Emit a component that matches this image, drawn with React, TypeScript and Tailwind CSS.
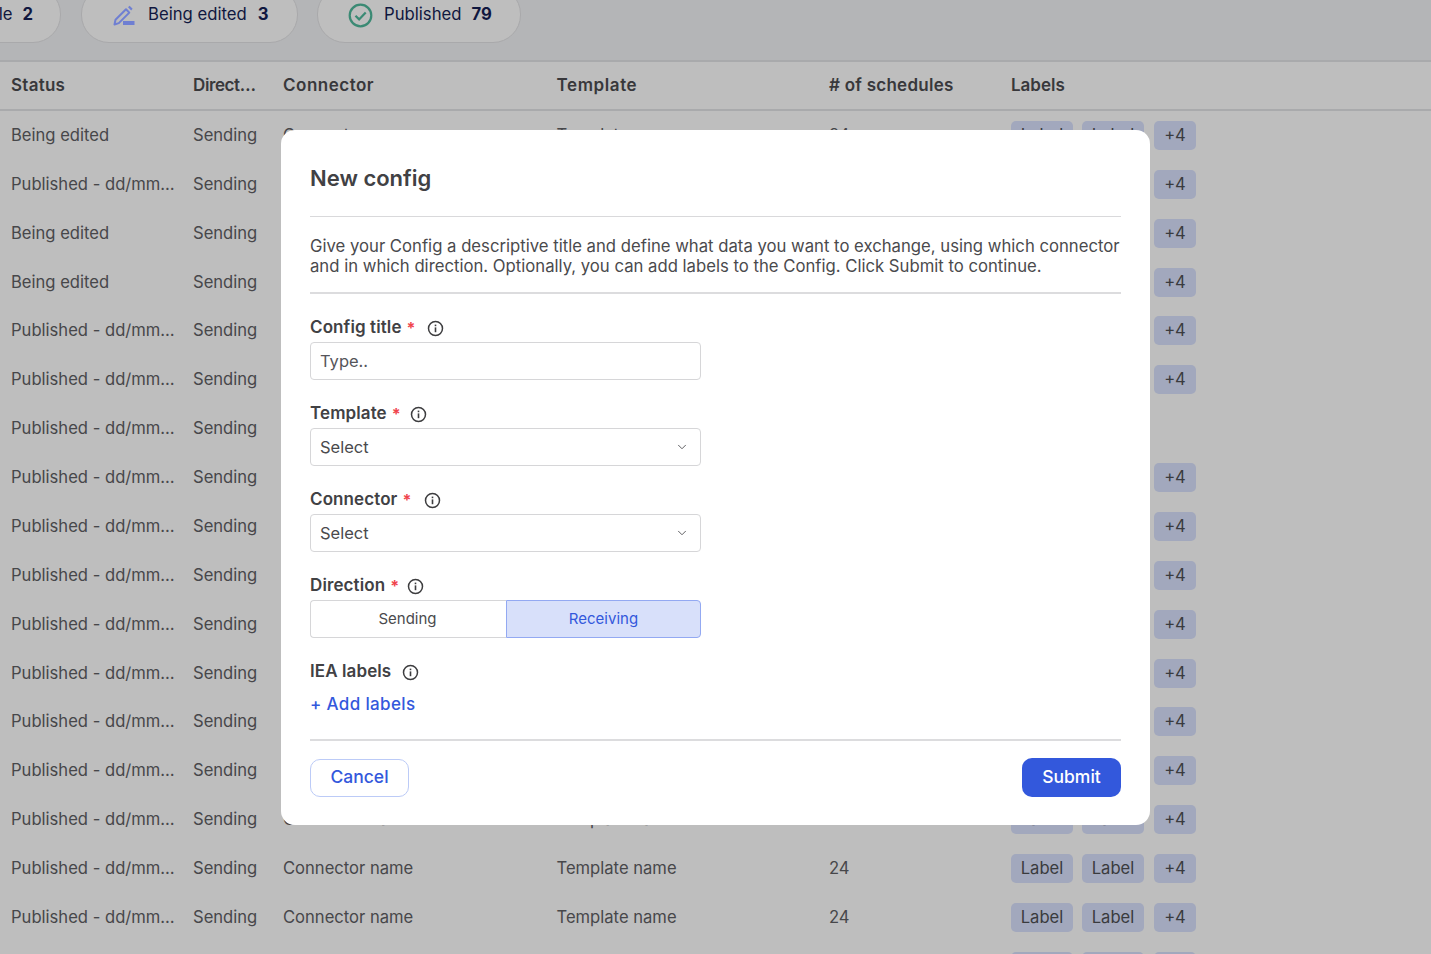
import React from "react";
import { ChevronDown } from "lucide-react";

const statusRows = [
  "Being edited", "Published - dd/mm…", "Being edited", "Being edited",
  "Published - dd/mm…", "Published - dd/mm…", "Published - dd/mm…", "Published - dd/mm…",
  "Published - dd/mm…", "Published - dd/mm…", "Published - dd/mm…", "Published - dd/mm…",
  "Published - dd/mm…", "Published - dd/mm…", "Published - dd/mm…", "Published - dd/mm…",
  "Published - dd/mm…", "Published - dd/mm…",
];

const gridCols = "grid grid-cols-[182px_90px_273.5px_272.5px_182px_1fr] pl-[11px]";

function Chip({ text, w }: { text: string; w: string }) {
  return (
    <span className={`${w} h-[29px] flex items-center justify-center rounded-[5px] bg-[#a2a8bd] text-[16.6px] text-[#3a3b3e]`}>
      {text}
    </span>
  );
}

function Info() {
  return (
    <svg width="17" height="17" viewBox="0 0 17 17" fill="none" className="shrink-0 block">
      <circle cx="8.5" cy="8.5" r="7" stroke="#3d3d3f" strokeWidth="1.5" />
      <rect x="7.7" y="7.4" width="1.6" height="4.8" fill="#3d3d3f" />
      <rect x="7.7" y="4.6" width="1.6" height="1.6" fill="#3d3d3f" />
    </svg>
  );
}

function FieldLabel({ text, required, gap }: { text: string; required?: boolean; gap: string }) {
  return (
    <div className="flex items-center h-[20px] pt-[2px] text-[17px] tracking-[0.1px] font-semibold text-[#414144]">
      <span>{text}</span>
      {required && <span className="ml-[5px] text-[#f0444c] text-[16px] font-bold leading-none">*</span>}
      <span className={gap}><Info /></span>
    </div>
  );
}

function SelectBox() {
  return (
    <div className="mt-[5px] w-[391px] h-[38px] rounded-[4px] border border-[#d6d6d8] flex items-center justify-between pl-[9px] pr-[11px] text-[16.5px] text-[#4a4a4d]">
      <span>Select</span>
      <ChevronDown size={14} strokeWidth={1.6} className="text-[#555558]" />
    </div>
  );
}

export default function App() {
  return (
    <div className="relative w-[1431px] h-[954px] overflow-hidden bg-[#bebebe] text-[#3f3f42] font-['Inter',sans-serif]">
      <div className="h-[62px] bg-[#b4b5b7] border-b-2 border-[#a9aaac] overflow-hidden">
        <div className="flex gap-[20px] -mt-[14px] -ml-[60px] text-[16.7px] text-[#10173f]">
          <div className="w-[121px] h-[57px] rounded-[28px] bg-[#bebebe] border border-[#a9a9ab] flex items-center justify-end gap-[10px] pr-[27px] pt-[1px]">
            <span>Sample</span><b className="font-bold">2</b>
          </div>
          <div className="w-[217px] h-[57px] rounded-[28px] bg-[#bebebe] border border-[#a9a9ab] flex items-center pl-[31px] pt-[1px] -mr-[1px]">
            <svg width="22" height="21" viewBox="0 0 22 21" className="mr-[13px] shrink-0">
              <path d="M2.5 14.8 13 4.3l3.3 3.3L5.8 18.1 1.5 19.5z" fill="none" stroke="#6f7fd2" strokeWidth="2" strokeLinejoin="round" />
              <path d="M15 2.2l1.6-1.4 3 3-1.4 1.6z" fill="#6f7fd2" />
              <rect x="10" y="16" width="11.5" height="4" fill="#6f7fd2" />
            </svg>
            <span>Being edited</span><b className="ml-[11px] font-bold">3</b>
          </div>
          <div className="w-[204px] h-[57px] rounded-[28px] bg-[#bebebe] border border-[#a9a9ab] flex items-center pl-[30px] pt-[1px]">
            <svg width="25" height="25" viewBox="0 0 25 25" className="mr-[11px] shrink-0" fill="none">
              <circle cx="12.5" cy="12.5" r="10.8" stroke="#3b8a74" strokeWidth="2.2" />
              <path d="M7.5 12.8l3.6 3.6 6.6-7" stroke="#3b8a74" strokeWidth="2.2" />
            </svg>
            <span>Published</span><b className="ml-[10px] font-bold">79</b>
          </div>
        </div>
      </div>

      <div className={`${gridCols} h-[49px] items-center border-b-2 border-[#a9aaac] text-[17px] tracking-[0.25px] font-semibold text-[#38383b]`}>
        <span>Status</span>
        <span className="tracking-[-0.4px]">Direct…</span>
        <span className="tracking-[0.5px]">Connector</span>
        <span className="tracking-[0.6px]">Template</span>
        <span># of schedules</span>
        <span className="tracking-[0px]">Labels</span>
      </div>

      {statusRows.map((s, i) => (
        <div key={i} className={`${gridCols} h-[48.875px] items-center text-[16.6px] text-[#47474a]`}>
          <span>{s}</span>
          <span>Sending</span>
          <span>Connector name</span>
          <span>Template name</span>
          <span>24</span>
          <div className="flex gap-[9px]">
            {i !== 6 && (
              <>
                <Chip text="Label" w="w-[62px]" />
                <Chip text="Label" w="w-[62px]" />
                <Chip text="+4" w="w-[42px] ml-[1px]" />
              </>
            )}
          </div>
        </div>
      ))}

      <div className="absolute left-[281px] top-[130px] w-[869px] h-[695px] rounded-[14px] bg-white px-[29px]">
        <div className="h-[87px] border-b border-[#d9d9db] pt-[34px] text-[22px] leading-[28px] font-semibold text-[#414144]">
          New config
        </div>
        <p className="h-[77px] pt-[19px] border-b-2 border-[#dcdcde] text-[16.7px] leading-[20px] text-[#4a4a4d] whitespace-nowrap">
          Give your Config a descriptive title and define what data you want to exchange, using which connector
          <br />
          and in which direction. Optionally, you can add labels to the Config. Click Submit to continue.
        </p>

        <div className="mt-[23px]">
          <FieldLabel text="Config title" required gap="ml-[11px]" />
          <div className="mt-[5px] w-[391px] h-[38px] rounded-[4px] border border-[#d6d6d8] flex items-center pl-[9px] text-[16.5px] text-[#55555a]">
            Type..
          </div>
        </div>

        <div className="mt-[23px]">
          <FieldLabel text="Template" required gap="ml-[9px]" />
          <SelectBox />
        </div>

        <div className="mt-[23px]">
          <FieldLabel text="Connector" required gap="ml-[12px]" />
          <SelectBox />
        </div>

        <div className="mt-[23px]">
          <FieldLabel text="Direction" required gap="ml-[8px]" />
          <div className="mt-[5px] w-[391px] h-[38px] flex text-[15px]">
            <div className="w-[196px] pr-[2px] rounded-l-[4px] border border-r-0 border-[#d6d6d8] flex items-center justify-center text-[#4a4a4d]">
              Sending
            </div>
            <div className="flex-1 rounded-r-[4px] border border-[#93a9f2] bg-[#d8e0fa] flex items-center justify-center text-[#3358dc]">
              Receiving
            </div>
          </div>
        </div>

        <div className="mt-[23px]">
          <FieldLabel text="IEA labels" gap="ml-[11px]" />
        </div>
        <div className="mt-[13px] h-[22px] flex items-center text-[17px] tracking-[0.35px] font-medium text-[#3358dc]">
          + Add labels
        </div>

        <div className="mt-[23px] border-t-2 border-[#dcdcde] pt-[17px] flex justify-between items-center">
          <button className="w-[99px] h-[38px] rounded-[10px] border border-[#bccbf7] text-[17.5px] font-medium text-[#3358dc]">
            Cancel
          </button>
          <button className="w-[99px] h-[39px] rounded-[10px] bg-[#3358dc] text-[17.5px] font-medium text-white">
            Submit
          </button>
        </div>
      </div>
    </div>
  );
}
